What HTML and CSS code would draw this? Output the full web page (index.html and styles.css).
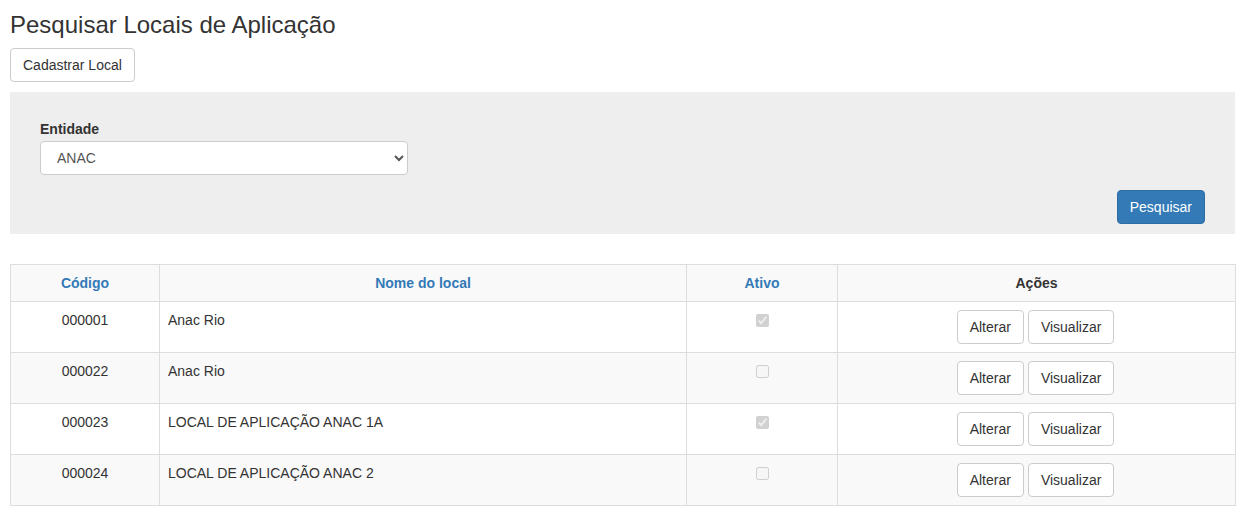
FILE: index.html
```html
<!DOCTYPE html>
<html lang="pt">
<head>
<meta charset="utf-8">
<title>Pesquisar Locais de Aplicação</title>
<link rel="stylesheet" href="styles.css">
</head>
<body>
<div class="page">
  <h1 class="title">Pesquisar Locais de Aplicação</h1>
  <button class="btn" type="button">Cadastrar Local</button>
  <form class="filter">
    <label class="filter-label" for="entidade">Entidade</label>
    <select id="entidade" class="filter-select">
      <option>ANAC</option>
    </select>
    <div class="filter-actions">
      <button class="btn btn-primary" type="button">Pesquisar</button>
    </div>
  </form>
  <table class="grid">
    <colgroup>
      <col class="c-code">
      <col class="c-name">
      <col class="c-active">
      <col class="c-actions">
    </colgroup>
    <thead>
      <tr>
        <th class="link">Código</th>
        <th class="link">Nome do local</th>
        <th class="link">Ativo</th>
        <th>Ações</th>
      </tr>
    </thead>
    <tbody>
      <tr>
        <td class="center">000001</td>
        <td>Anac Rio</td>
        <td class="center"><input type="checkbox" class="chk" checked disabled></td>
        <td class="center actions"><button class="btn" type="button">Alterar</button><button class="btn" type="button">Visualizar</button></td>
      </tr>
      <tr>
        <td class="center">000022</td>
        <td>Anac Rio</td>
        <td class="center"><input type="checkbox" class="chk" disabled></td>
        <td class="center actions"><button class="btn" type="button">Alterar</button><button class="btn" type="button">Visualizar</button></td>
      </tr>
      <tr>
        <td class="center">000023</td>
        <td>LOCAL DE APLICAÇÃO ANAC 1A</td>
        <td class="center"><input type="checkbox" class="chk" checked disabled></td>
        <td class="center actions"><button class="btn" type="button">Alterar</button><button class="btn" type="button">Visualizar</button></td>
      </tr>
      <tr>
        <td class="center">000024</td>
        <td>LOCAL DE APLICAÇÃO ANAC 2</td>
        <td class="center"><input type="checkbox" class="chk" disabled></td>
        <td class="center actions"><button class="btn" type="button">Alterar</button><button class="btn" type="button">Visualizar</button></td>
      </tr>
    </tbody>
  </table>
</div>
</body>
</html>
```
FILE: styles.css
```css
html, body {
  margin: 0;
  padding: 0;
  background: #fff;
}
body {
  font-family: "Liberation Sans", Arial, sans-serif;
  font-size: 14px;
  line-height: 20px;
  color: #333;
}
.page {
  width: 1225px;
  padding: 0 10px;
}
.title {
  margin: 12px 0 10px;
  font-size: 24px;
  font-weight: 400;
  line-height: 26px;
  color: #333;
}
.btn {
  display: inline-block;
  box-sizing: border-box;
  height: 34px;
  padding: 6px 12px;
  font-family: inherit;
  font-size: 14px;
  line-height: 20px;
  color: #333;
  background: #fff;
  border: 1px solid #ccc;
  border-radius: 4px;
  cursor: pointer;
}
.btn-primary {
  color: #fff;
  background: #337ab7;
  border-color: #2e6da4;
}
.filter {
  margin: 10px 0 30px;
  padding: 27px 30px 10px;
  background: #eee;
}
.filter-label {
  display: block;
  font-weight: 700;
  line-height: 20px;
  margin-bottom: 2px;
}
.filter-select {
  display: block;
  box-sizing: border-box;
  width: 368px;
  height: 34px;
  padding: 6px 12px;
  font-family: inherit;
  font-size: 14px;
  color: #555;
  background: #fff;
  border: 1px solid #ccc;
  border-radius: 4px;
}
.filter-actions {
  display: flex;
  justify-content: flex-end;
  margin-top: 15px;
}
.grid {
  width: 1225px;
  border-collapse: collapse;
  table-layout: fixed;
  border: 1px solid #ddd;
}
.c-code { width: 149px; }
.c-name { width: 527px; }
.c-active { width: 151px; }
.c-actions { width: 398px; }
.grid th, .grid td {
  border: 1px solid #ddd;
  padding: 8px;
  line-height: 20px;
  vertical-align: top;
  text-align: left;
}
.grid th {
  text-align: center;
  font-weight: 700;
  background: #f9f9f9;
}
.grid th.link {
  color: #337ab7;
}
.grid tbody tr:nth-child(even) td {
  background: #f9f9f9;
}
.grid td.center {
  text-align: center;
}
.grid td.actions {
  padding-top: 8px;
  padding-bottom: 8px;
  padding-left: 6px;
}
.actions .btn + .btn {
  margin-left: 4px;
}
.chk {
  margin: 4px 0 0;
  width: 13px;
  height: 13px;
}
```
